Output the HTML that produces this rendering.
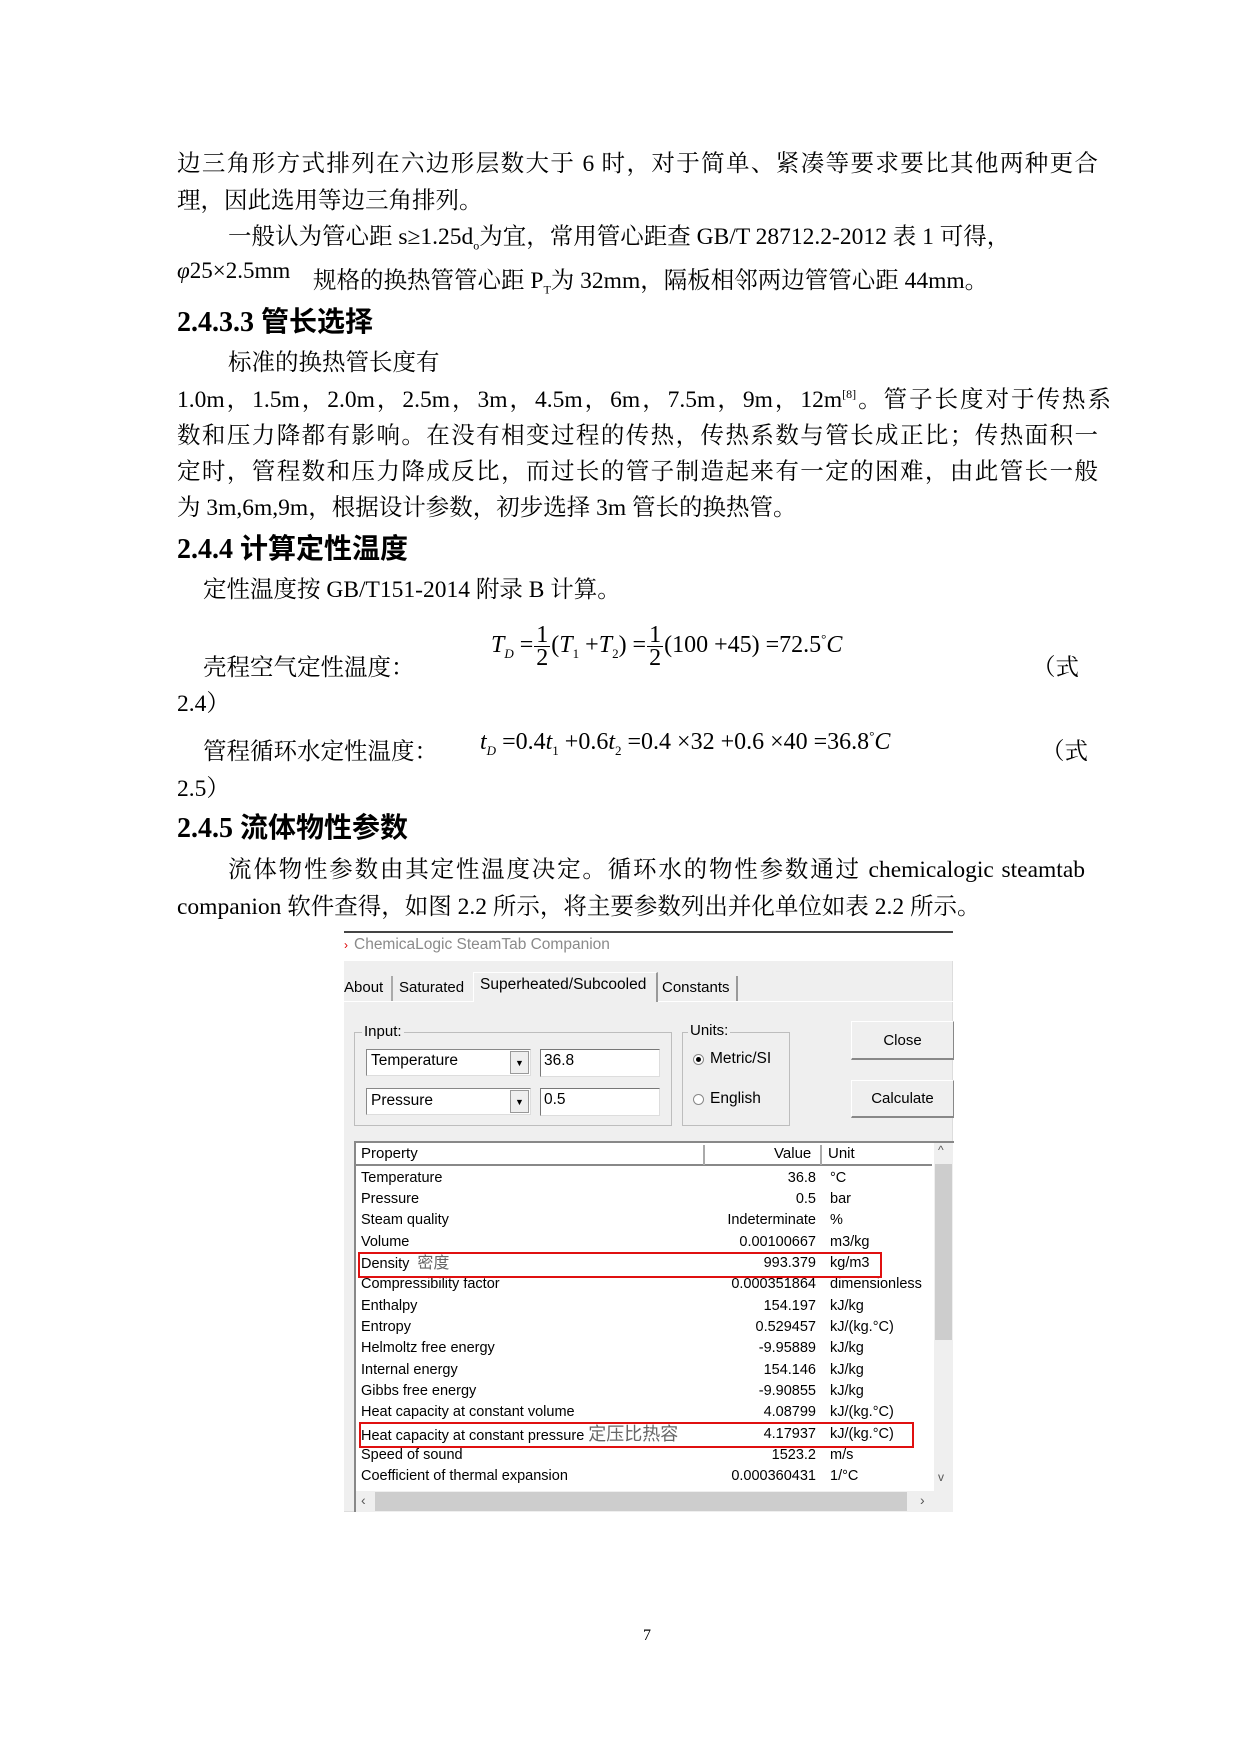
<!DOCTYPE html>
<html><head><meta charset="utf-8"><style>
*{margin:0;padding:0;box-sizing:border-box}
body{width:1240px;height:1754px;background:#fff;position:relative;overflow:hidden;font-family:"Liberation Serif","Noto Serif CJK SC",serif;color:#000}
sub,sup{line-height:0}
.l{position:absolute;font-size:23.5px;line-height:30px;white-space:nowrap}
.j{text-align:justify;text-align-last:justify;white-space:normal;height:30px;overflow:visible}
.h{position:absolute;font-size:28px;line-height:32px;font-weight:bold;white-space:nowrap;font-family:"Liberation Serif","Noto Sans CJK SC",sans-serif}
.m{position:absolute;font-family:"Liberation Serif",serif;font-size:24px;white-space:nowrap;line-height:30px}
.m i{font-style:italic}
.fr{display:inline-block;vertical-align:middle;text-align:center;line-height:22px;margin:0 1px}
.fr span{display:block;border-bottom:1px solid #000;padding:0 2px}
.d{position:absolute;font-family:"Liberation Sans","Noto Sans CJK SC",sans-serif;font-size:15px;color:#000;white-space:nowrap}
.box{position:absolute;border:1px solid #bdbdbd}
.row{position:absolute;left:361px;width:580px;height:21px;line-height:21px;font-family:"Liberation Sans","Noto Sans CJK SC",sans-serif;font-size:14.5px}
.row .p{position:absolute;left:0}
.row .v{position:absolute;right:125px;text-align:right}
.row .u{position:absolute;left:469px}
</style></head><body>

<div class="l j" style="left:177px;top:149px;width:921px">边三角形方式排列在六边形层数大于 6 时，对于简单、紧凑等要求要比其他两种更合</div>
<div class="l" style="left:177px;top:186px">理，因此选用等边三角排列。</div>
<div class="l" style="left:228px;top:222px">一般认为管心距 s≥1.25d<sub style="font-size:12px">o</sub>为宜，常用管心距查 GB/T 28712.2-2012 表 1 可得，</div>
<div class="l" style="left:177px;top:256px;font-size:23px"><i>φ</i>25×2.5mm</div>
<div class="l" style="left:313px;top:266px">规格的换热管管心距 P<sub style="font-size:12px">T</sub>为 32mm，隔板相邻两边管管心距 44mm。</div>
<div class="h" style="left:177px;top:307px">2.4.3.3 管长选择</div>
<div class="l" style="left:228px;top:348px">标准的换热管长度有</div>
<div class="l j" style="left:177px;top:385px;width:934px">1.0m，1.5m，2.0m，2.5m，3m，4.5m，6m，7.5m，9m，12m<sup style="font-size:12px">[8]</sup>。管子长度对于传热系</div>
<div class="l j" style="left:177px;top:421px;width:921px">数和压力降都有影响。在没有相变过程的传热，传热系数与管长成正比；传热面积一</div>
<div class="l j" style="left:177px;top:457px;width:921px">定时，管程数和压力降成反比，而过长的管子制造起来有一定的困难，由此管长一般</div>
<div class="l" style="left:177px;top:493px">为 3m,6m,9m，根据设计参数，初步选择 3m 管长的换热管。</div>
<div class="h" style="left:177px;top:534px">2.4.4 计算定性温度</div>
<div class="l" style="left:203px;top:575px">定性温度按 GB/T151-2014 附录 B 计算。</div>

<div class="m" style="left:491px;top:624px"><i>T</i><sub style="font-size:13px"><i>D</i></sub> =<span class="fr"><span>1</span>2</span>(<i>T</i><sub style="font-size:13px">1</sub> +<i>T</i><sub style="font-size:13px">2</sub>) =<span class="fr"><span>1</span>2</span>(100 +45) =72.5<sup style="font-size:13px">°</sup><i>C</i></div>
<div class="l" style="left:203px;top:653px">壳程空气定性温度：</div>
<div class="l" style="left:1032px;top:653px">（式</div>
<div class="l" style="left:177px;top:689px">2.4）</div>
<div class="m" style="left:480px;top:727px"><i>t</i><sub style="font-size:13px"><i>D</i></sub> =0.4<i>t</i><sub style="font-size:13px">1</sub> +0.6<i>t</i><sub style="font-size:13px">2</sub> =0.4 ×32 +0.6 ×40 =36.8<sup style="font-size:13px">°</sup><i>C</i></div>
<div class="l" style="left:203px;top:737px">管程循环水定性温度：</div>
<div class="l" style="left:1041px;top:737px">（式</div>
<div class="l" style="left:177px;top:774px">2.5）</div>
<div class="h" style="left:177px;top:813px">2.4.5 流体物性参数</div>
<div class="l j" style="left:228px;top:855px;width:857px">流体物性参数由其定性温度决定。循环水的物性参数通过 chemicalogic steamtab</div>
<div class="l" style="left:177px;top:892px">companion 软件查得，如图 2.2 所示，将主要参数列出并化单位如表 2.2 所示。</div>

<!-- screenshot -->
<div style="position:absolute;left:344px;top:931px;width:609px;height:2px;background:#444"></div>
<div style="position:absolute;left:344px;top:933px;width:609px;height:28px;background:#fff"></div>
<div class="d" style="left:344px;top:938px;color:#d00;font-size:12px">›</div>
<div class="d" style="left:354px;top:936px;color:#8a8a8a;font-size:15.5px">ChemicaLogic SteamTab Companion</div>
<div style="position:absolute;left:344px;top:961px;width:609px;height:551px;background:#efefef;border-right:1px solid #ddd;border-bottom:1px solid #ddd"></div>
<!-- tabs -->
<div style="position:absolute;left:344px;top:1001px;width:609px;height:1px;background:#fff"></div>
<div class="d" style="left:344px;top:979px">About</div>
<div style="position:absolute;left:391px;top:976px;width:2px;height:25px;background:#aaa"></div>
<div class="d" style="left:399px;top:979px">Saturated</div>
<div style="position:absolute;left:473px;top:972px;width:185px;height:30px;background:#efefef;border-top:1px solid #fff;border-left:1px solid #fff;border-right:2px solid #999"></div>
<div class="d" style="left:480px;top:976px;font-size:15.5px">Superheated/Subcooled</div>
<div class="d" style="left:662px;top:979px">Constants</div>
<div style="position:absolute;left:736px;top:976px;width:2px;height:25px;background:#999"></div>
<!-- input group -->
<div class="box" style="left:354px;top:1032px;width:318px;height:94px"></div>
<div class="d" style="left:362px;top:1023px;background:#efefef;padding:0 2px">Input:</div>
<div style="position:absolute;left:366px;top:1049px;width:165px;height:27px;background:#fff;border:1px solid #888;border-right-color:#ddd;border-bottom-color:#ddd"></div>
<div style="position:absolute;left:510px;top:1051px;width:19px;height:23px;background:#efefef;border:1px solid #999;font-size:9px;text-align:center;line-height:23px">▼</div>
<div class="d" style="left:371px;top:1052px;font-size:15.5px">Temperature</div>
<div style="position:absolute;left:540px;top:1049px;width:120px;height:28px;background:#fff;border:1px solid #777;border-right-color:#ddd;border-bottom-color:#ddd"></div>
<div class="d" style="left:544px;top:1052px;font-size:15.5px">36.8</div>
<div style="position:absolute;left:366px;top:1088px;width:165px;height:27px;background:#fff;border:1px solid #888;border-right-color:#ddd;border-bottom-color:#ddd"></div>
<div style="position:absolute;left:510px;top:1090px;width:19px;height:23px;background:#efefef;border:1px solid #999;font-size:9px;text-align:center;line-height:23px">▼</div>
<div class="d" style="left:371px;top:1092px;font-size:15.5px">Pressure</div>
<div style="position:absolute;left:540px;top:1088px;width:120px;height:28px;background:#fff;border:1px solid #777;border-right-color:#ddd;border-bottom-color:#ddd"></div>
<div class="d" style="left:544px;top:1091px;font-size:15.5px">0.5</div>
<!-- units -->
<div class="box" style="left:682px;top:1032px;width:108px;height:94px"></div>
<div class="d" style="left:688px;top:1022px;background:#efefef;padding:0 2px">Units:</div>
<div style="position:absolute;left:693px;top:1054px;width:11px;height:11px;border-radius:50%;border:1px solid #888;background:#fff"></div>
<div style="position:absolute;left:696px;top:1057px;width:5px;height:5px;border-radius:50%;background:#000"></div>
<div class="d" style="left:710px;top:1050px;font-size:15.5px">Metric/SI</div>
<div style="position:absolute;left:693px;top:1094px;width:11px;height:11px;border-radius:50%;border:1px solid #888;background:#fff"></div>
<div class="d" style="left:710px;top:1090px;font-size:15.5px">English</div>
<!-- buttons -->
<div style="position:absolute;left:851px;top:1021px;width:103px;height:39px;background:#efefef;border:1px solid #fff;border-right-color:#888;border-bottom:2px solid #888;font-family:'Liberation Sans',sans-serif;font-size:15px;text-align:center;line-height:37px">Close</div>
<div style="position:absolute;left:851px;top:1080px;width:103px;height:38px;background:#efefef;border:1px solid #fff;border-right-color:#888;border-bottom:2px solid #888;font-family:'Liberation Sans',sans-serif;font-size:15px;text-align:center;line-height:36px">Calculate</div>
<!-- list -->
<div style="position:absolute;left:354px;top:1141px;width:600px;height:371px;background:#fff;border:2px solid #888;border-right:none;border-bottom:none"></div>
<div style="position:absolute;left:356px;top:1143px;width:576px;height:23px;background:#fff;border-bottom:2px solid #888"></div>
<div style="position:absolute;left:703px;top:1145px;width:2px;height:20px;background:#aaa"></div>
<div style="position:absolute;left:820px;top:1145px;width:2px;height:20px;background:#aaa"></div>
<div class="d" style="left:361px;top:1145px">Property</div>
<div class="d" style="left:774px;top:1145px">Value</div>
<div class="d" style="left:828px;top:1145px">Unit</div>
<div style="position:absolute;left:934px;top:1143px;width:19px;height:348px;background:#efefef"></div>
<div style="position:absolute;left:935px;top:1164px;width:17px;height:176px;background:#cdcdcd"></div>
<div class="d" style="left:938px;top:1143px;font-size:12px;color:#555">^</div>
<div class="d" style="left:938px;top:1470px;font-size:12px;color:#555">v</div>
<div style="position:absolute;left:356px;top:1491px;width:597px;height:21px;background:#efefef"></div>
<div style="position:absolute;left:375px;top:1492px;width:532px;height:19px;background:#cdcdcd"></div>
<div class="d" style="left:361px;top:1492px;font-size:14px;color:#555">‹</div>
<div class="d" style="left:920px;top:1492px;font-size:14px;color:#555">›</div>

<div class="row" style="top:1168px"><span class="p">Temperature</span><span class="v">36.8</span><span class="u">°C</span></div>
<div class="row" style="top:1189px"><span class="p">Pressure</span><span class="v">0.5</span><span class="u">bar</span></div>
<div class="row" style="top:1210px"><span class="p">Steam quality</span><span class="v">Indeterminate</span><span class="u">%</span></div>
<div class="row" style="top:1232px"><span class="p">Volume</span><span class="v">0.00100667</span><span class="u">m3/kg</span></div>
<div class="row" style="top:1253px"><span class="p">Density &nbsp;<span style="color:#666;font-size:16px">密度</span></span><span class="v">993.379</span><span class="u">kg/m3</span></div>
<div class="row" style="top:1274px"><span class="p">Compressibility factor</span><span class="v">0.000351864</span><span class="u">dimensionless</span></div>
<div class="row" style="top:1296px"><span class="p">Enthalpy</span><span class="v">154.197</span><span class="u">kJ/kg</span></div>
<div class="row" style="top:1317px"><span class="p">Entropy</span><span class="v">0.529457</span><span class="u">kJ/(kg.°C)</span></div>
<div class="row" style="top:1338px"><span class="p">Helmoltz free energy</span><span class="v">-9.95889</span><span class="u">kJ/kg</span></div>
<div class="row" style="top:1360px"><span class="p">Internal energy</span><span class="v">154.146</span><span class="u">kJ/kg</span></div>
<div class="row" style="top:1381px"><span class="p">Gibbs free energy</span><span class="v">-9.90855</span><span class="u">kJ/kg</span></div>
<div class="row" style="top:1402px"><span class="p">Heat capacity at constant volume</span><span class="v">4.08799</span><span class="u">kJ/(kg.°C)</span></div>
<div class="row" style="top:1424px"><span class="p">Heat capacity at constant pressure <span style="color:#666;font-size:18px">定压比热容</span></span><span class="v">4.17937</span><span class="u">kJ/(kg.°C)</span></div>
<div class="row" style="top:1445px"><span class="p">Speed of sound</span><span class="v">1523.2</span><span class="u">m/s</span></div>
<div class="row" style="top:1466px"><span class="p">Coefficient of thermal expansion</span><span class="v">0.000360431</span><span class="u">1/°C</span></div>

<div style="position:absolute;left:358px;top:1252px;width:524px;height:26px;border:2px solid #e01010"></div>
<div style="position:absolute;left:359px;top:1422px;width:555px;height:26px;border:2px solid #e01010"></div>

<div class="l" style="left:643px;top:1621px;font-size:16px">7</div>
</body></html>
